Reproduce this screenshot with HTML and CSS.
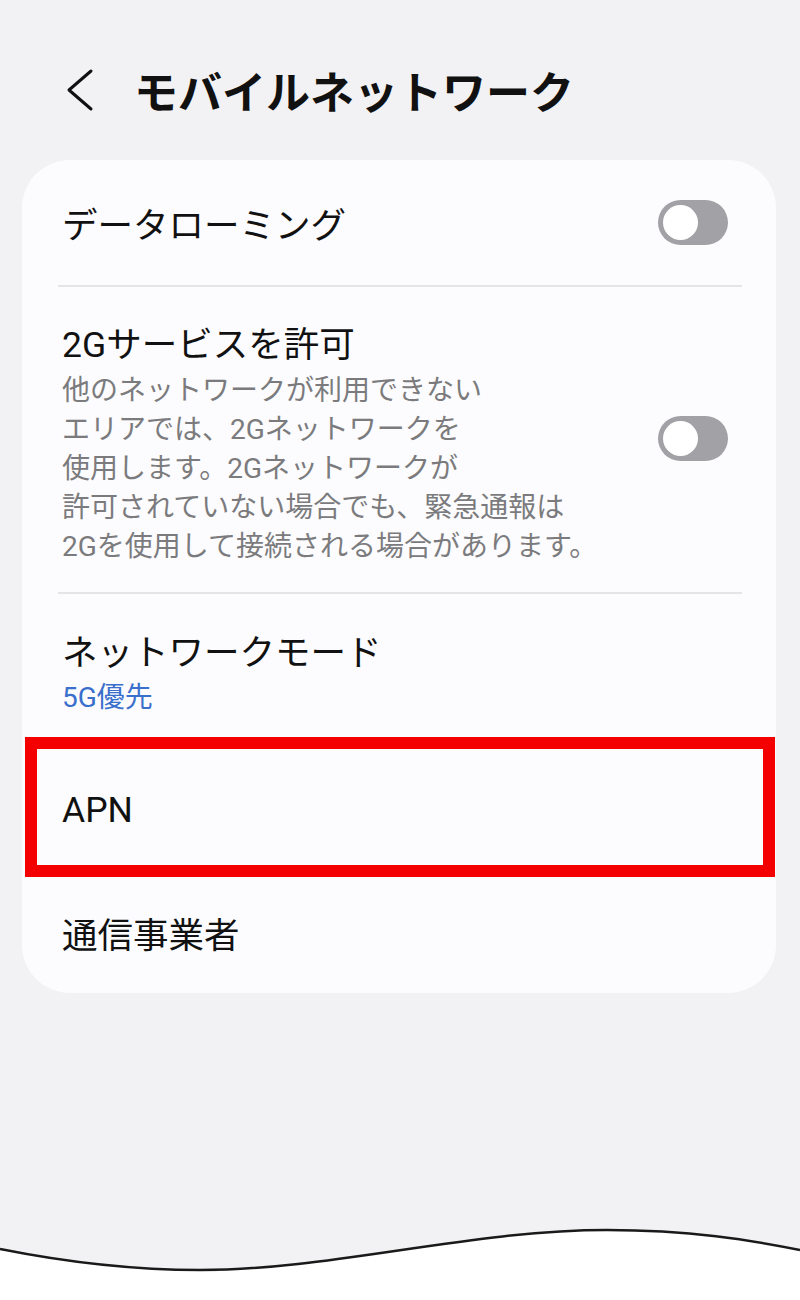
FILE: index.html
```html
<!DOCTYPE html>
<html lang="ja">
<head>
  <meta charset="UTF-8" />
  <title>モバイルネットワーク</title>
  <link rel="stylesheet" href="styles.css">
</head>
<body>

<div class="page">
  <div class="header">
    <svg class="back" width="32" height="44" viewBox="0 0 32 44">
      <path d="M27 3 L5 22 L27 41" fill="none" stroke="#111" stroke-width="3" stroke-linecap="round" stroke-linejoin="round"/>
    </svg>
    <h1 class="title">モバイルネットワーク</h1>
  </div>

  <div class="card">
    <div class="row row-roaming">
      <div class="label">
        <div class="name">データローミング</div>
      </div>
      <div class="toggle"><span class="knob"></span></div>
    </div>

    <div class="divider"></div>

    <div class="row row-2g">
      <div class="label">
        <div class="name">2Gサービスを許可</div>
        <div class="desc">他のネットワークが利用できない<br>エリアでは、2Gネットワークを<br>使用します。2Gネットワークが<br>許可されていない場合でも、緊急通報は<br>2Gを使用して接続される場合があります。</div>
      </div>
      <div class="toggle toggle-2g"><span class="knob"></span></div>
    </div>

    <div class="divider"></div>

    <div class="row row-mode">
      <div class="label">
        <div class="name">ネットワークモード</div>
        <div class="value">5G優先</div>
      </div>
    </div>

    <div class="row row-apn">
      <div class="label">
        <div class="name">APN</div>
      </div>
    </div>

    <div class="row row-carrier">
      <div class="label">
        <div class="name">通信事業者</div>
      </div>
    </div>
  </div>

  <svg class="wave" width="800" height="80" viewBox="0 0 800 80">
    <path d="M0 29 C80 45 140 50 200 50 C330 50 470 10 607 10 C690 10 750 20 800 30 L800 80 L0 80 Z" fill="#fff"/>
    <path d="M0 29 C80 45 140 50 200 50 C330 50 470 10 607 10 C690 10 750 20 800 30" fill="none" stroke="#1a1a1a" stroke-width="2.5"/>
  </svg>
</div>

</body>
</html>
```

FILE: styles.css
```css
body {
  font-family: Roboto, "Noto Sans CJK JP", sans-serif;
  margin: 0;
  background: #f2f2f4;
  color: #111;
}
.page {
  min-height: 1300px;
  display: flex;
  flex-direction: column;
}
.header {
  display: flex;
  align-items: center;
  height: 60px;
  padding: 60px 0 0 64px;
}
.back {
  display: block;
}
.title {
  margin: 0 0 0 38px;
  font-size: 44px;
  font-weight: 700;
  line-height: 60px;
  font-family: "Noto Sans CJK JP", sans-serif;
}
.card {
  margin: 40px 24px 0 22px;
  background: #fcfcfe;
  border-radius: 48px;
}
.row {
  position: relative;
  display: flex;
  align-items: center;
  justify-content: space-between;
  padding: 0 48px 0 40px;
  box-sizing: border-box;
}
.name {
  font-size: 35.5px;
  line-height: 44px;
}
.desc {
  margin-top: 4px;
  font-size: 28px;
  line-height: 39px;
  color: #7b7b7d;
}
.value {
  margin-top: 3px;
  font-size: 28px;
  line-height: 39px;
  color: #3a6fcc;
}
.divider {
  height: 2px;
  background: #e5e5e7;
  margin: 0 34px 0 36px;
}
.row-roaming {
  height: 125px;
  padding-top: 6px;
}
.row-roaming .toggle {
  margin-top: -6px;
}
.row-2g {
  padding-top: 36px;
  padding-bottom: 26px;
}
.toggle-2g {
  margin-bottom: 12px;
}
.row-mode {
  padding-top: 37px;
  padding-bottom: 20px;
}
.row-apn {
  height: 140px;
  padding-top: 6px;
}
.row-apn::after {
  content: "";
  position: absolute;
  top: 0;
  bottom: 0;
  left: 3px;
  right: 1px;
  border: 12px solid #f40000;
}
.row-carrier {
  height: 116px;
  padding-top: 2px;
}
.toggle {
  width: 70px;
  height: 45px;
  border-radius: 23px;
  background: #a2a2a6;
  display: flex;
  align-items: center;
  padding-left: 5px;
  box-sizing: border-box;
  flex-shrink: 0;
}
.knob {
  width: 35px;
  height: 35px;
  border-radius: 50%;
  background: #fff;
}
.wave {
  display: block;
  margin-top: auto;
}
```
